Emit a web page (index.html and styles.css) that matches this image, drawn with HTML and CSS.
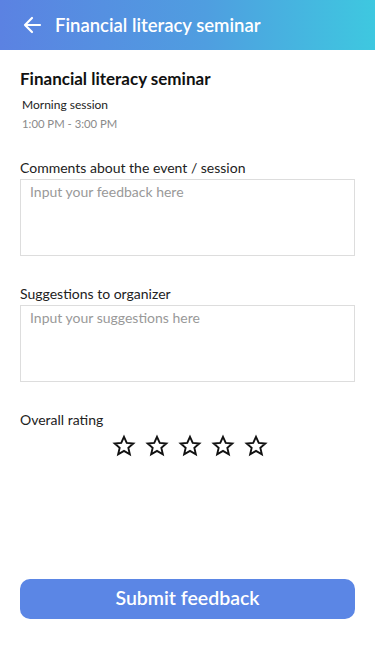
FILE: index.html
```html
<!DOCTYPE html>
<html>
<head>
<meta charset="utf-8">
<link rel="stylesheet" href="styles.css">
</head>
<body>
<header class="appbar">
  <svg class="back" width="20" height="20" viewBox="0 0 20 20"><path d="M18 10H3M10 3l-7 7 7 7" fill="none" stroke="#fff" stroke-width="2.2" stroke-linecap="round" stroke-linejoin="round"/></svg>
  <h1 class="appbar-title">Financial literacy seminar</h1>
</header>
<main class="content">
  <h2 class="event-title">Financial literacy seminar</h2>
  <div class="session">Morning session</div>
  <div class="time">1:00 PM - 3:00 PM</div>

  <label class="label first">Comments about the event / session</label>
  <textarea class="box" placeholder="Input your feedback here"></textarea>

  <label class="label second">Suggestions to organizer</label>
  <textarea class="box" placeholder="Input your suggestions here"></textarea>

  <div class="label third">Overall rating</div>
  <div class="stars">
    <svg class="star" viewBox="0 0 24 24"><path d="M12 2.8l2.75 6.05 6.6.6-5 4.4 1.5 6.5L12 16.9l-5.85 3.45 1.5-6.5-5-4.4 6.6-.6z" fill="none" stroke="#111" stroke-width="1.9" stroke-linejoin="miter"/></svg>
    <svg class="star" viewBox="0 0 24 24"><path d="M12 2.8l2.75 6.05 6.6.6-5 4.4 1.5 6.5L12 16.9l-5.85 3.45 1.5-6.5-5-4.4 6.6-.6z" fill="none" stroke="#111" stroke-width="1.9" stroke-linejoin="miter"/></svg>
    <svg class="star" viewBox="0 0 24 24"><path d="M12 2.8l2.75 6.05 6.6.6-5 4.4 1.5 6.5L12 16.9l-5.85 3.45 1.5-6.5-5-4.4 6.6-.6z" fill="none" stroke="#111" stroke-width="1.9" stroke-linejoin="miter"/></svg>
    <svg class="star" viewBox="0 0 24 24"><path d="M12 2.8l2.75 6.05 6.6.6-5 4.4 1.5 6.5L12 16.9l-5.85 3.45 1.5-6.5-5-4.4 6.6-.6z" fill="none" stroke="#111" stroke-width="1.9" stroke-linejoin="miter"/></svg>
    <svg class="star" viewBox="0 0 24 24"><path d="M12 2.8l2.75 6.05 6.6.6-5 4.4 1.5 6.5L12 16.9l-5.85 3.45 1.5-6.5-5-4.4 6.6-.6z" fill="none" stroke="#111" stroke-width="1.9" stroke-linejoin="miter"/></svg>
  </div>

  <button class="submit">Submit feedback</button>
</main>
</body>
</html>
```
FILE: styles.css
```css
* { box-sizing: border-box; }
html, body { margin: 0; padding: 0; background: #fff; }
body {
  font-family: Lato, "Noto Sans", sans-serif;
  color: #1a1a1a;
  width: 375px;
  height: 667px;
  overflow: hidden;
}
.appbar {
  height: 50px;
  display: flex;
  align-items: center;
  padding-left: 22px;
  background: linear-gradient(90deg, #5b82e2 0%, #4f9ee0 55%, #3ec8e0 100%);
}
.back { display: block; margin-right: 13px; }
.appbar-title {
  margin: 0;
  font-size: 18.5px;
  font-weight: 600;
  color: #fff;
}
.content {
  padding: 0 20px;
  display: flex;
  flex-direction: column;
}
.event-title {
  margin: 18px 0 0;
  font-size: 17px;
  font-weight: 700;
  line-height: 22px;
  color: #111;
}
.session {
  margin: 7px 0 0 2px;
  font-size: 12px;
  line-height: 15px;
  color: #222;
}
.time {
  margin: 4px 0 0 2px;
  font-size: 11.3px;
  line-height: 15px;
  color: #8a8a8a;
}
.label {
  font-size: 14px;
  line-height: 18px;
  color: #222;
}
.label.first { margin-top: 28px; }
.label.second { margin-top: 29px; }
.label.third { margin-top: 29px; }
.box {
  display: block;
  width: 335px;
  height: 77px;
  margin: 2px 0 0;
  border: 1px solid #ddd;
  border-radius: 0;
  padding: 3px 9px;
  font-family: Lato, "Noto Sans", sans-serif;
  font-size: 14px;
  line-height: 18px;
  resize: none;
  outline: none;
}
.box::placeholder { color: #999; }
.stars {
  display: flex;
  justify-content: center;
  gap: 9px;
  margin-top: 5px;
  padding-left: 4px;
}
.star { width: 24px; height: 24px; display: block; }
.submit {
  margin-top: 121px;
  height: 40px;
  width: 335px;
  border: none;
  border-radius: 10px;
  background: #5b86e5;
  color: #fff;
  font-family: Lato, "Noto Sans", sans-serif;
  font-size: 19.5px;
  font-weight: 600;
  padding: 0 0 3px;
}
```
